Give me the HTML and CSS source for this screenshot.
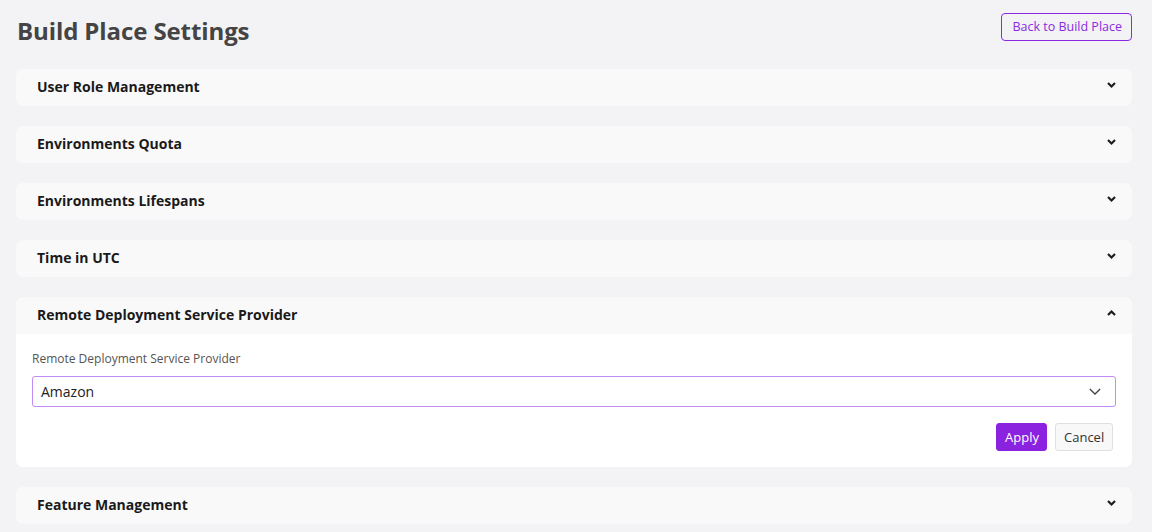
FILE: index.html
```html
<!DOCTYPE html>
<html>
<head>
<meta charset="utf-8">
<link rel="stylesheet" href="styles.css">
</head>
<body>
<div class="page">
  <div class="top">
    <h1 class="title">Build Place Settings</h1>
    <button class="back">Back to Build Place</button>
  </div>
  <div class="list">
    <div class="card"><div class="head"><span>User Role Management</span><svg class="chev" viewBox="0 0 10 8"><path d="M1.5 2 L5 5.5 L8.5 2" /></svg></div></div>
    <div class="card"><div class="head"><span>Environments Quota</span><svg class="chev" viewBox="0 0 10 8"><path d="M1.5 2 L5 5.5 L8.5 2" /></svg></div></div>
    <div class="card"><div class="head"><span>Environments Lifespans</span><svg class="chev" viewBox="0 0 10 8"><path d="M1.5 2 L5 5.5 L8.5 2" /></svg></div></div>
    <div class="card"><div class="head"><span>Time in UTC</span><svg class="chev" viewBox="0 0 10 8"><path d="M1.5 2 L5 5.5 L8.5 2" /></svg></div></div>
    <div class="card open">
      <div class="head"><span>Remote Deployment Service Provider</span><svg class="chev" viewBox="0 0 10 8"><path d="M1.5 6 L5 2.5 L8.5 6" /></svg></div>
      <div class="body">
        <label class="label">Remote Deployment Service Provider</label>
        <div class="select"><span>Amazon</span><svg class="selchev" viewBox="0 0 14 8"><path d="M1 1 L7 7 L13 1" /></svg></div>
        <div class="actions">
          <button class="apply">Apply</button>
          <button class="cancel">Cancel</button>
        </div>
      </div>
    </div>
    <div class="card"><div class="head"><span>Feature Management</span><svg class="chev" viewBox="0 0 10 8"><path d="M1.5 2 L5 5.5 L8.5 2" /></svg></div></div>
  </div>
</div>
</body>
</html>
```
FILE: styles.css
```css
* { box-sizing: border-box; }
html, body { margin: 0; padding: 0; }
body {
  background: #f3f2f4;
  font-family: "Open Sans", "Noto Sans", sans-serif;
  color: #212121;
}
.page { padding: 13px 20px 0 16px; }
.top {
  display: flex;
  justify-content: space-between;
  align-items: flex-start;
  height: 56px;
}
.title {
  margin: 1px 0 0 1px;
  font-size: 24px;
  font-weight: 700;
  color: #444;
  line-height: 34px;
  letter-spacing: -0.1px;
}
.back {
  font-family: inherit;
  font-size: 12.5px;
  color: #8a2be2;
  background: transparent;
  border: 1px solid #8a2be2;
  border-radius: 4px;
  height: 28px;
  padding: 0 9px 0 10px;
  white-space: nowrap;
  line-height: 26px;
}
.list { display: flex; flex-direction: column; gap: 20px; }
.card {
  background: #f9f9f9;
  border-radius: 7px;
  overflow: hidden;
}
.card.open { background: #fff; }
.head {
  height: 37px;
  display: flex;
  align-items: center;
  justify-content: space-between;
  padding: 0 15px 2px 21px;
  background: #f9f9f9;
  font-size: 14px;
  font-weight: 700;
  color: #1a1a1a;
}
.chev { width: 11px; height: 8px; margin-top: -4px; }
.chev path, .selchev path {
  fill: none;
  stroke: #1e1e1e;
  stroke-width: 2.2;
}
.body { padding: 16px 16px 16px 16px; }
.label {
  display: block;
  font-size: 12px;
  color: #555;
  line-height: 18px;
  margin-bottom: 8px;
}
.select {
  height: 31px;
  border: 1px solid #c48af5;
  border-radius: 3px;
  display: flex;
  align-items: center;
  justify-content: space-between;
  padding: 0 14px 0 8px;
  font-size: 14px;
  color: #222;
}
.selchev { width: 12px; height: 7px; }
.selchev path { stroke: #444; stroke-width: 1.5; }
.actions {
  display: flex;
  justify-content: flex-end;
  gap: 8px;
  margin-top: 16px;
  padding-right: 3px;
}
.actions button {
  font-family: inherit;
  font-size: 13px;
  height: 28px;
  border-radius: 3px;
  padding: 0 8px;
}
.apply { background: #8a22e0; color: #fff; border: 1px solid #8a22e0; width: 51px; }
.cancel { background: #f8f8f8; color: #333; border: 1px solid #e0e0e0; width: 58px; }
```
